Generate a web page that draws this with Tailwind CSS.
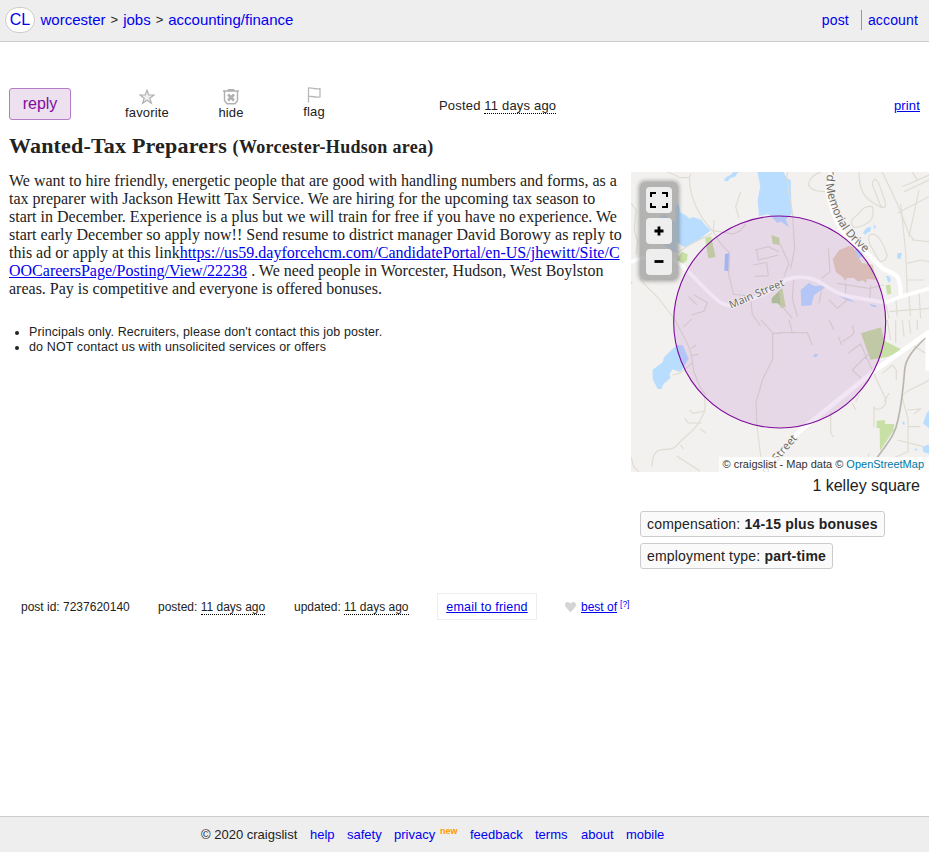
<!DOCTYPE html>
<html lang="en">
<head>
<meta charset="utf-8">
<title>Wanted-Tax Preparers</title>
<script src="https://cdn.jsdelivr.net/npm/@tailwindcss/browser@4"></script>
</head>
<body class="bg-white text-[#222] font-['Liberation_Sans',Arial,sans-serif]">
<div class="flex h-[852px] w-[929px] flex-col overflow-hidden">
  <header class="flex h-[42px] shrink-0 items-center border-b border-[#ccc] bg-[#eee] pr-[11px] pl-[5px] pb-px text-[15px]">
    <a class="flex h-[26px] w-[30px] items-center justify-center rounded-full border border-[#ccc] bg-white text-[16px] text-[#00e]">CL</a>
    <nav class="ml-[5.500px] flex items-center whitespace-nowrap">
      <a class="text-[#00e]">worcester</a><span class="mx-[5px] text-[13px]">&gt;</span><a class="text-[#00e]">jobs</a><span class="mx-[5px] text-[13px]">&gt;</span><a class="text-[#00e]">accounting/finance</a>
    </nav>
    <div class="ml-auto flex items-center text-[14px] tracking-[.15px]">
      <a class="mr-[12px] text-[#00e]">post</a>
      <a class="flex h-[20px] items-center border-l border-[#999] pl-[6px] text-[#00e]">account</a>
    </div>
  </header>

  <div class="mt-[46px] flex h-[32px] shrink-0 pr-[9px] pl-[9px] text-[13px]">
    <button class="h-[32px] w-[62px] rounded-[3px] border border-[#b57cc7] bg-[#ede0ef] pb-px text-[16px] text-[#800c9e]">reply</button>
    <div class="ml-[48px] flex w-[56px] flex-col items-center">
      <svg class="mt-[1px] h-[16px] w-[16px]" viewBox="0 0 16 16" fill="#eee" stroke="#b0b0b0" stroke-width="1.200"><path d="M8 1.200 9.800 6H15l-4.200 3.200L12.400 14.300 8 11.200 3.600 14.300 5.200 9.200 1 6h5.200z"/></svg>
      <span class="leading-[15px] tracking-[.15px]">favorite</span>
    </div>
    <div class="ml-[28px] flex w-[56px] flex-col items-center">
      <svg class="mt-[1px] h-[16px] w-[16px]" viewBox="0 0 16 16" fill="none" stroke="#b0b0b0" stroke-width="1.400"><path d="M0 2h16M5.500 1.700V.7h5v1M1.500 2v9.500l2.500 3.200h8l2.500-3.200V2"/><path d="m5 5.500 6 6m0-6-6 6" stroke-width="2.600"/></svg>
      <span class="leading-[15px] tracking-[.15px]">hide</span>
    </div>
    <div class="ml-[27px] flex w-[56px] flex-col items-center">
      <svg class="-mt-px h-[16px] w-[16px]" viewBox="0 0 16 16" fill="none" stroke="#b8b8b8" stroke-width="1.300"><path d="M2.500 15.500V.5M2.500.9c4.500-.4 6 1.800 11.500.7v8.300c-5 1.200-7-1.200-11.500-.5"/></svg>
      <span class="leading-[17px] tracking-[.15px]">flag</span>
    </div>
    <div class="ml-[97px] mt-[10px] whitespace-nowrap leading-[15px] tracking-[.18px]">Posted <span class="inline-block border-b border-dotted border-black leading-[15px]">11 days ago</span></div>
    <a class="mt-[10px] ml-auto leading-[16px] tracking-[.15px] text-[#00e] underline">print</a>
  </div>

  <h1 class="mt-[12px] ml-[9px] h-[28px] shrink-0 whitespace-nowrap font-['Liberation_Serif',serif] text-[22px] leading-[28px] font-bold tracking-[.19px]">Wanted-Tax Preparers <span class="text-[18px] tracking-[.3px]">(Worcester-Hudson area)</span></h1>

  <main class="mt-[12px] flex h-[400px] shrink-0">
    <section class="w-[622px] pl-[9px]">
      <div class="whitespace-nowrap font-['Liberation_Serif',serif] text-[16px] leading-[18px]">
        <p>We want to hire friendly, energetic people that are good with handling numbers and forms, as a</p>
        <p>tax preparer with Jackson Hewitt Tax Service. We are hiring for the upcoming tax season to</p>
        <p>start in December. Experience is a plus but we will train for free if you have no experience. We</p>
        <p>start early December so apply now!! Send resume to district manager David Borowy as reply to</p>
        <p>this ad or apply at this link<a class="text-[#00e] underline">https://us59.dayforcehcm.com/CandidatePortal/en-US/jhewitt/Site/C</a></p>
        <p><a class="text-[#00e] underline">OOCareersPage/Posting/View/22238</a> . We need people in Worcester, Hudson, West Boylston</p>
        <p>areas. Pay is competitive and everyone is offered bonuses.</p>
      </div>
      <ul class="mt-[27px] list-disc pl-[20px] text-[12.500px] leading-[15px] tracking-[.12px]">
        <li>Principals only. Recruiters, please don't contact this job poster.</li>
        <li>do NOT contact us with unsolicited services or offers</li>
      </ul>
    </section>
    <aside class="ml-[9px] w-[298px]">
      <div class="relative h-[300px] w-[298px] overflow-hidden bg-[#f2f1ef]">
        <svg class="h-[300px] w-[298px]" viewBox="3 6 894 900" fill="none">
          <g fill="#b9ddff">
            <path d="M280 32 290 20 302 15 310 6h15l-10 14-15 5-6 9z"/>
            <path d="M382 6h78l10 18 12 6 2 104-20 15-22 10-20-22-10-4-25 6-4-50 8-40-4-20z"/>
            <path d="M145 100l-10 12 5 105 25 15 45-25 32-26-20-20-8-12-25-8-10 5-12-10-15-8z"/>
            <path d="M95 150 90 138l15-5 15 15 20 10v60l-30 15-10-12 8-20z"/><path d="m112 216 28 5v25h-15l-20-22z"/>
            <path d="M140 525l18 1 18 40-18 30-8 10-22-8-10 15 4 10-22 20-5 14-12 0-15-30-0-28 30-22 4-15z"/>
          </g>
          <g transform="translate(447 0)" fill="#b9ddff">
            <path d="M0 25h15l8 30 13 10 2 67-12 8-6 10 10 22-28-20z"/>
            <path d="M225 240l20-8 8 26-20 10zM252 188l10-14 14-4-2 14-18 10zM283 168l5-3 3 7-5 4zM355 250l14-2-5 20-10-3zM321 317l12 3 3 12-8 6z"/>
            <path d="m65 360 25-22 15 10 32-2 2 6-34 24-8 30-30 2z"/><path d="m180 378 30 8 20 12-28-8zM270 402l20 4 4 6-14-2z"/>
          </g>
          <g transform="translate(447 450)" fill="#b9ddff"><path d="m101 108 9-7 8 3-8 8zM258 110h6v7h-6zM371 304l6 2v8l-7-2zM432 310l12-32 8-8v56zM430 382l15-8 8 0v28l-20-6zM404 388l12-3-5 8z"/></g>
          <path d="m285 252 14-3-2 55-14-2z" fill="#a3ccff"/>
          <g fill="#c8dfa6">
            <path d="m225 203 18-4 14 62-22 4zM135 277l20-32 18 8-2 18-10 9zM424 195l24 8v22l-20-4zM3 335l5 1-5 6z"/>
            <path d="m425 385 25-25 8 55-15-15-18 0z" fill="#b5cf98"/>
            <path d="m320 345 14-1 3 27-12 3z" transform="translate(447 0)"/>
            <path d="m0 360 10-5 10 55-15 5z" transform="translate(447 0)"/>
            <path d="m246 40 60-18 10 40 55 28-45 20-20 4-32 5zM293 302l24-2 2 12 27 0-3 20-40 60-1-67-9-1z" transform="translate(447 450)"/>
          </g>
          <path d="M161 268l20-28 30-12 12 4 12 26 15 22 32 4 8 45-27-2-1 12-12-8-12 4-15-12-20 2-4 8-8-12-20-14z" transform="translate(447 0)" fill="#e3d2ba"/>

          <g stroke="#dfdcd2" stroke-width="3.500">
            <path d="M110 5l20 8 20 10h28l5-12M178 23c0 50 20 90 35 115s35 40 48 65 15 20 37 45l-2 65 15 60 50 5 6 55 25 35M252 150l-2 32 60 10 20-10 18-20M332 65l-15 45 10 35M245 190c-30 20-70 30-100 58M3 100l15 20-5 60 10 35-5 40M30 325c10 20 45 45 60 65s30 40 42 55c15 30 45 75 52 110l8 52 18 45 15 20v50l-15 30c-15 30-45 45-70 75s-70-20-75 65M140 858l70 45M225 723l-35 7-12-10M214 759h-40l-10-15M210 775l17 14M152 825l8 12M3 795M3 860l8 30 15 15M192 374l40 24-10 25-38 12M176 380l25 25M183 535l15-10M185 557l20-4M185 580l-35 30-22 5M160 470l25-22"/>
            <path d="m393 450 35 38v80l-30 60-20 70 3 70 17 138M430 490h20M375 240l40-10 32 15M380 240l5 30 60-15M370 285l40-8 5 40-40 2"/>
          </g>
          <g transform="translate(447 0)" stroke="#dfdcd2" stroke-width="3.500">
            <path d="M25 6c-8 35 15 100 16 130l6 100-12 60M140 65c-80 0-50-50-15-58M240 6c0 70 25 85 70 108M285 30c8-10 20 20 35 72 0 15-12 10-15 5l-20-50c-5-10-8-20 0-27zM310 6l45 95 35 90 15 20M355 130l95-50M370 50l80-35M375 65l75-35M400 6l15 25M280 110c-20-5-35 10-45 25-25 15-20 35-5 37 30-5 55-20 52-50zM272 195c20-12 40 20 52 60 0 15-15 25-25 15l-25-45c-5-10-8-25-2-30zM365 100l15 145 5 130M385 280l40-10 25 5M385 330h50M400 210l50 5M420 60l-30 140"/>
            <path d="m0 215 30 65-15 40M45 320l-5 65 15 55M148 235l5 70-25 20M130 350l-10 50M175 340l95 15 45-10M200 340l0 50M275 345l-3 40M150 390l25 25 30-25M10 410l30 35M320 400l10 45M350 380l5 60M390 378l4 60M420 370l5 75M330 425l120-10"/>
          </g>
          <g transform="translate(447 450)" stroke="#dfdcd2" stroke-width="3.500">
            <path d="M0 38h85l15 38M30 0l10 38M150 0l15 30M190 65l30-20 5-8-5-20M178 50l10 25M207 100l38-28 40 90 35 75c5 20-20 40-35 25l-0 60M220 150l50-50M220 150l30 28M310 160l30-25 12 15v30M155 275v65l10 12M230 245l10-20M220 250l10 20M330 220l-15 25M350 0v70M370 0l5 50M390 0l5 40M325 0l10 60M415 0v30M440 100l-40-25M450 180c-30 20-85 35-80 55M370 235l17 60 0 100-45 20M388 320h35M385 270l40-3-20 15M355 360l80 20M270 400l-15 50"/>
          </g>
          <path d="M895 495C855 535 827 560 824 600S815 700 804 750 775 815 742 862" stroke="#bab6ae" stroke-width="5"/>
          <g stroke="#fff" stroke-width="11" stroke-linejoin="round">
            <path d="M3 276C50 255 100 252 135 272S200 335 250 380Q275 405 300 407L400 375 447 342Q470 325 500 322 540 318 575 340 625 375 660 380L767 398 812 380 900 355"/>
            <path d="M603 6 592 65C605 120 620 170 655 205L717 255 757 295 792 312Q812 320 812 378" stroke-width="13"/>
            <path d="M900 484 732 603 507 785 395 910" stroke-width="14"/><path d="M892 490v112"/>
          </g>
          <circle cx="449" cy="456" r="318" fill="#800ca0" fill-opacity=".105" stroke="#800c9e" stroke-width="3.300"/>
          <path id="main" d="M303 416 480 340"/>
          <path id="memorial" d="M596 -20 588 45C594 90 614 145 640 182S685 225 718 264"/>
          <path id="street" d="M395 929 506 802"/>
          <g font-family="'Open Sans','Noto Sans',sans-serif" fill="#66635f" stroke="#f5f3f1" stroke-width="4" paint-order="stroke" font-size="32">
            <text textLength="176"><textPath href="#main">Main Street</textPath></text>
            <text font-size="34" textLength="306"><textPath href="#memorial">ard Memorial Drive</textPath></text>
            <text textLength="164"><textPath href="#street">ood Street</textPath></text>
          </g>
        </svg>
        <div class="absolute top-[10px] left-[9px] flex w-[38px] flex-col gap-[5px] rounded-[5px] bg-[#999]/70 px-[6px] py-[5px] shadow-[0_0_4px_1px_rgba(0,0,0,.35)]">
          <div class="flex h-[26px] items-center justify-center rounded-[4px] bg-[#eee]"><svg class="h-[18px] w-[18px]" viewBox="0 0 18 18" fill="none" stroke="#000" stroke-width="2"><path d="M1 6V2h5M12 2h5v4M17 12v4h-5M6 16H1v-4"/></svg></div>
          <div class="flex h-[26px] items-center justify-center rounded-[4px] bg-[#eee]"><svg class="h-[10px] w-[10px]" viewBox="0 0 10 10" stroke="#000" stroke-width="2.800"><path d="M5 .5v9M.5 5h9"/></svg></div>
          <div class="flex h-[26px] items-center justify-center rounded-[4px] bg-[#eee]"><svg class="h-[10px] w-[10px]" viewBox="0 0 10 10" stroke="#000" stroke-width="2.800"><path d="M.5 4.500h9"/></svg></div>
        </div>
        <div class="absolute right-0 bottom-0 h-[15px] w-[210px] bg-white/75 pr-[5px] text-right text-[11px] leading-[15px] whitespace-nowrap text-[#333]">© craigslist - Map data © <a class="text-[#0078a8]">OpenStreetMap</a></div>
      </div>
      <div class="mt-[4px] pr-[9px] text-right text-[16px] leading-[20px]">1 kelley square</div>
      <div class="mt-[15px] ml-[9px] flex flex-col items-start gap-[6px] whitespace-nowrap text-[14px] tracking-[.18px]">
        <div class="h-[26px] rounded-[3px] border border-[#ccc] bg-[#fafafa] px-[6px] leading-[24px]">compensation: <b>14-15 plus bonuses</b></div>
        <div class="h-[26px] rounded-[3px] border border-[#ccc] bg-[#fafafa] px-[6px] leading-[24px]">employment type: <b>part-time</b></div>
      </div>
    </aside>
  </main>

  <div class="mt-[21px] flex h-[27px] shrink-0 items-center pl-[21px] text-[12px] whitespace-nowrap">
    <span class="w-[137px]">post id: 7237620140</span>
    <span class="w-[136px]">posted: <span class="border-b border-dotted border-black">11 days ago</span></span>
    <span class="w-[143px]">updated: <span class="border-b border-dotted border-black">11 days ago</span></span>
    <a class="flex h-[27px] w-[100px] items-center justify-center border border-[#eee] pt-px text-[12.500px] tracking-[.2px] text-[#00e] underline">email to friend</a>
    <svg class="ml-[28px] h-[12px] w-[11px]" viewBox="0 0 11 12" fill="#d4d4d4"><path d="M5.500 11.500C4 9 0 6.800 0 3.500 0 .2 4.500 0 5.500 3 6.500 0 11 .2 11 3.500c0 3.300-4 5.500-5.500 8z"/></svg>
    <a class="ml-[5px] text-[#00e] underline">best of</a><a class="mb-[5px] ml-[3px] text-[8.500px] leading-[9px] text-[#00e]">[?]</a>
  </div>

  <footer class="mt-auto flex h-[36px] shrink-0 items-center border-t border-[#ccc] bg-[#eee] pl-[201px] text-[13px] whitespace-nowrap text-[#00e]">
    <span class="w-[109px] text-[#222]">© 2020 craigslist</span>
    <a class="w-[37px]">help</a><a class="w-[47px]">safety</a><a class="w-[46px]">privacy</a><span class="mb-[6px] w-[30px] text-[9px] font-bold text-[#f90]">new</span><a class="w-[65px]">feedback</a><a class="w-[46px]">terms</a><a class="w-[45px]">about</a><a>mobile</a>
  </footer>
</div>
</body>
</html>
